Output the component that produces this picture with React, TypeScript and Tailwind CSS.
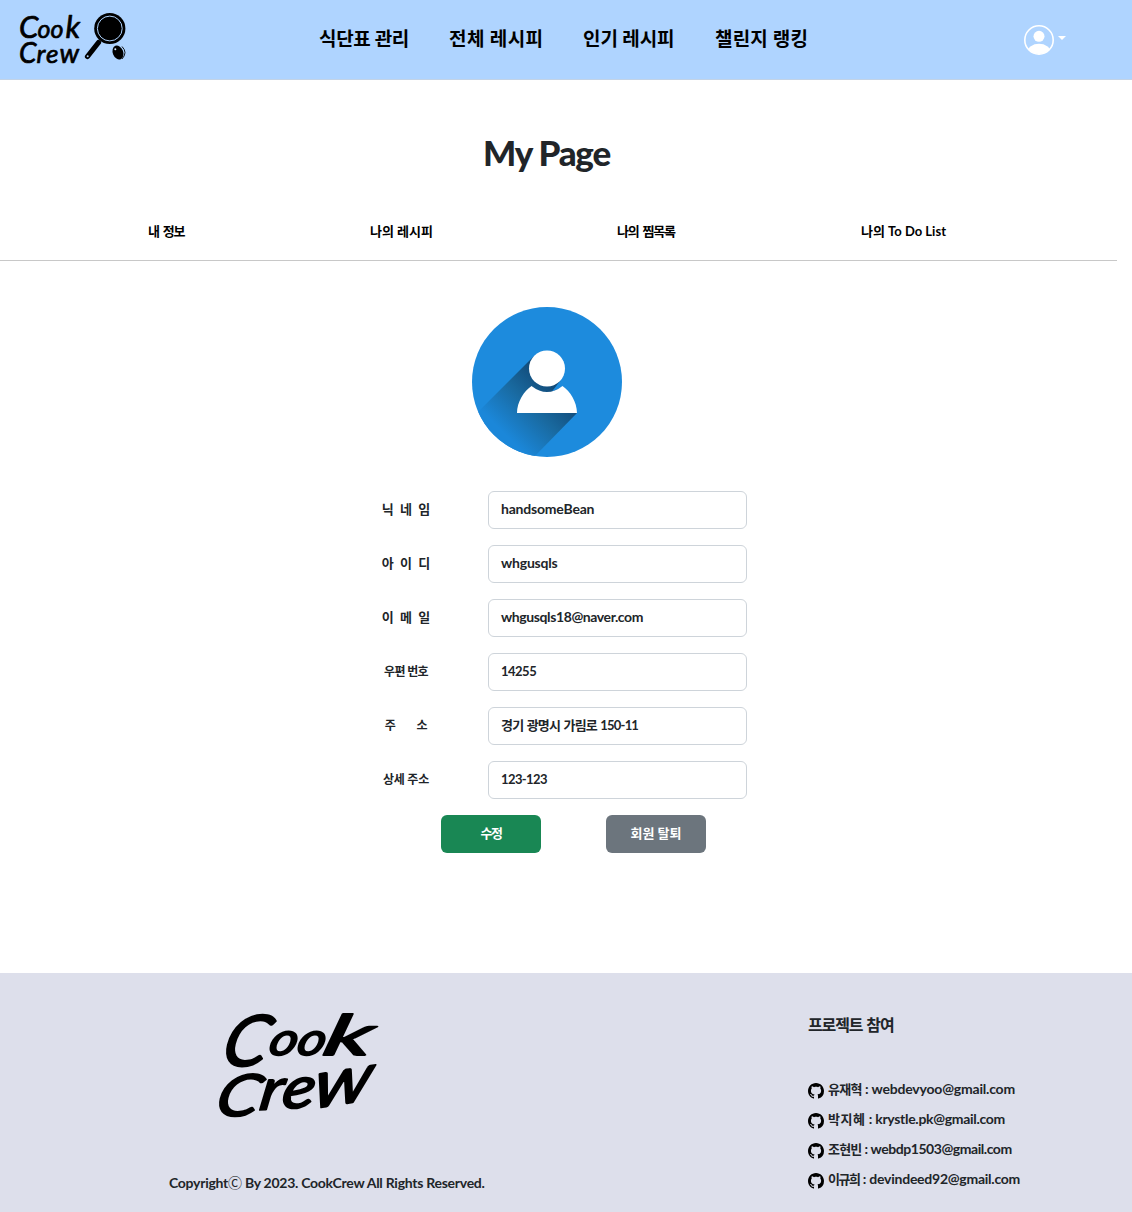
import React from "react";
import { BsGithub } from "react-icons/bs";

const nav = [
  { label: "식단표 관리", box: "w-[90px] tracking-[-0.35px]" },
  { label: "전체 레시피", box: "w-[94px] tracking-[0.4px]" },
  { label: "인기 레시피", box: "w-[92px] tracking-[-0.1px]" },
  { label: "챌린지 랭킹", box: "w-[93px] tracking-[0.2px]" },
];

const fields = [
  { label: "닉  네  임", value: "handsomeBean", box: "pb-[3px]", fit: "tracking-[-0.2px]", labelFit: "" },
  { label: "아  이  디", value: "whgusqls", box: "pb-[3px]", fit: "tracking-[-0.2px]", labelFit: "" },
  { label: "이  메  일", value: "whgusqls18@naver.com", box: "pb-[3px]", fit: "tracking-[-0.4px]", labelFit: "" },
  { label: "우편 번호", value: "14255", box: "pb-0", fit: "text-[13px] tracking-[-0.5px]", labelFit: "text-[12px] tracking-[-0.6px]" },
  { label: "주        소", value: "경기 광명시 가림로 150-11", box: "pb-0", fit: "text-[13px] tracking-[-0.8px] [word-spacing:1px]", labelFit: "text-[12px] tracking-[-0.3px]" },
  { label: "상세 주소", value: "123-123", box: "pb-0", fit: "text-[13px] tracking-[-0.6px]", labelFit: "text-[12px] tracking-[-0.2px]" },
];

const members = [
  { name: "유재혁", mail: "webdevyoo@gmail.com", fit: "tracking-[-0.2px]", nameFit: "tracking-[-0.7px]" },
  { name: "박지혜", mail: "krystle.pk@gmail.com", fit: "tracking-[-0.3px]", nameFit: "tracking-[0.6px]" },
  { name: "조현빈", mail: "webdp1503@gmail.com", fit: "tracking-[-0.45px]", nameFit: "tracking-[-0.8px]" },
  { name: "이규희", mail: "devindeed92@gmail.com", fit: "tracking-[-0.25px]", nameFit: "tracking-[-1.4px]" },
];

function HeaderLogo() {
  return (
    <svg width="110" height="58" viewBox="18 9 110 58" className="mb-[3px] ml-[18px] overflow-visible">
      <g fontFamily="Lato, sans-serif" fontStyle="italic" fontWeight="400" fill="#000" stroke="#000" strokeWidth="0.7" strokeLinejoin="round">
        <text y="38">
          <tspan x="19" fontSize="31">C</tspan>
          <tspan x="37.5" fontSize="25">o</tspan>
          <tspan x="50.5" fontSize="25">o</tspan>
          <tspan x="65.5" fontSize="31">k</tspan>
        </text>
        <text y="62.5">
          <tspan x="19" fontSize="28">C</tspan>
          <tspan x="36.5" fontSize="26">r</tspan>
          <tspan x="46" fontSize="26">e</tspan>
          <tspan x="59.5" fontSize="27">w</tspan>
        </text>
      </g>
      <path d="M98.5 42.5 87.5 56.5" stroke="#000" strokeWidth="5.2" strokeLinecap="round" />
      <circle cx="109.8" cy="28.5" r="15.6" />
      <circle cx="109.8" cy="28.5" r="12.4" fill="none" stroke="#afd4ff" strokeWidth="1" />
      <circle cx="87.7" cy="56.2" r="1" fill="#afd4ff" />
      <ellipse cx="118" cy="52.5" rx="5.2" ry="7.2" transform="rotate(-22 118 52.5)" />
      <path d="M122 46.5Q128 52.5 122 59" stroke="#000" strokeWidth="0.9" fill="none" />
      <circle cx="115.3" cy="49.3" r="1" fill="#d5e8ff" />
    </svg>
  );
}

function FooterLogo() {
  return (
    <svg width="166" height="112" viewBox="216 1008 166 112" className="overflow-visible">
      <g fontFamily="Lato, sans-serif" fontStyle="italic" fontWeight="400" fill="#000" stroke="#000" strokeWidth="1.8" strokeLinejoin="round">
        <text transform="translate(219 1066) skewX(-14)" fontSize="71" textLength="45" lengthAdjust="spacingAndGlyphs">C</text>
        <text transform="translate(267 1055) skewX(-14)" fontSize="46" textLength="56" lengthAdjust="spacingAndGlyphs">oo</text>
        <text transform="translate(321 1055) skewX(-14)" fontSize="56" textLength="48" lengthAdjust="spacingAndGlyphs">k</text>
        <text transform="translate(213 1116) skewX(-14)" fontSize="58" textLength="43" lengthAdjust="spacingAndGlyphs">C</text>
        <text transform="translate(258 1110) rotate(-3) skewX(-12)" fontSize="58" textLength="55" lengthAdjust="spacingAndGlyphs">re</text>
        <text transform="translate(311 1109) rotate(-9) skewX(-18)" fontSize="66" textLength="59" lengthAdjust="spacingAndGlyphs">w</text>
      </g>
    </svg>
  );
}

function Avatar() {
  return (
    <svg width="150" height="150" viewBox="0 0 150 150">
      <defs>
        <clipPath id="disc"><circle cx="75" cy="75" r="75" /></clipPath>
        <linearGradient id="shade" gradientUnits="userSpaceOnUse" x1="82" y1="78" x2="33" y2="127">
          <stop offset="0" stopColor="#124a78" />
          <stop offset="0.45" stopColor="#19699f" />
          <stop offset="1" stopColor="#1b87d9" />
        </linearGradient>
      </defs>
      <g clipPath="url(#disc)">
        <rect width="150" height="150" fill="#1d8bdd" />
        <path d="M61.5 49.5 0 111V150H62L105 106 88 74Z" fill="url(#shade)" />
      </g>
      <path d="M80 84.5 88 74 93 79Z" fill="#1d8bdd" />
      <circle cx="75" cy="61.5" r="18" fill="#fff" />
      <path d="M59.5 79Q75 91 90.5 79C98 84 105 95 105 106H45C45 95 52 84 59.5 79Z" fill="#fff" />
    </svg>
  );
}

export default function App() {
  return (
    <div className="flex h-[1212px] w-[1132px] flex-col bg-white font-['Lato','Noto_Sans_CJK_KR',sans-serif] text-[14px] font-bold text-[#212529]">
      <header className="flex h-20 shrink-0 items-center border-b border-[#c3d3e6] bg-[#afd4ff] text-black">
        <HeaderLogo />
        <nav className="mb-[2px] ml-[191px] flex gap-10 text-[19px] leading-8">
          {nav.map((n) => (
            <a key={n.label} className={`${n.box} whitespace-nowrap`}>{n.label}</a>
          ))}
        </nav>
        <button className="ml-[216px] flex items-center gap-1">
          <svg width="30" height="30" viewBox="0 0 30 30">
            <defs><clipPath id="user"><circle cx="15" cy="15" r="14" /></clipPath></defs>
            <circle cx="15" cy="15" r="14.2" fill="none" stroke="#fff" strokeWidth="1.6" />
            <circle cx="15" cy="11.3" r="5.5" fill="#fff" />
            <ellipse cx="15" cy="27" rx="11.5" ry="8.3" fill="#fff" clipPath="url(#user)" />
          </svg>
          <svg width="8" height="4" viewBox="0 0 8 4" className="mb-1"><path d="M0 0H8L4 4Z" fill="#fff" /></svg>
        </button>
      </header>

      <main className="flex h-[893px] shrink-0 flex-col">
        <h1 className="mt-[48px] w-[1093px] text-center text-[35px] leading-[48px] font-black tracking-[-1.2px]">My Page</h1>
        <nav className="mt-10 flex h-[45px] w-[1117px] border-b border-[#c8c8c8] pl-[148px] text-[13px] leading-[30px] text-black">
          <a className="w-[222px] tracking-[-1.2px] [word-spacing:2px]">내 정보</a>
          <a className="w-[247px]">나의 레시피</a>
          <a className="w-[244px] tracking-[-1.2px] [word-spacing:2px]">나의 찜목록</a>
          <a className="whitespace-nowrap">나의 To Do List</a>
        </nav>
        <div className="mt-[46px] flex w-[1093px] justify-center"><Avatar /></div>
        <form className="mt-[34px] ml-[346px] flex w-[401px] flex-col gap-4">
          {fields.map((f) => (
            <label key={f.label} className="flex h-[38px] items-center text-[13px]">
              <span className={`w-[120px] text-center whitespace-pre ${f.labelFit}`}>{f.label}</span>
              <span className={`ml-[22px] flex h-[38px] w-[259px] items-center rounded-md border border-[#ced4da] px-3 text-[14px] ${f.box}`}>
                <span className={`whitespace-nowrap ${f.fit}`}>{f.value}</span>
              </span>
            </label>
          ))}
        </form>
        <div className="mt-4 ml-[441px] flex gap-[65px] text-[13px] text-white">
          <button className="h-[38px] w-[100px] rounded-md bg-[#198754] tracking-[-1.5px]">수정</button>
          <button className="h-[38px] w-[100px] rounded-md bg-[#6c757d]">회원 탈퇴</button>
        </div>
      </main>

      <footer className="flex h-[239px] shrink-0 bg-[#dddfeb]">
        <div className="flex w-[808px] flex-col pt-[35px]">
          <div className="ml-[216px]"><FooterLogo /></div>
          <p className="mt-[51px] ml-[169px] leading-6 tracking-[-0.27px] whitespace-nowrap">Copyright<span className="font-normal">Ⓒ</span> By 2023. CookCrew All Rights Reserved.</p>
        </div>
        <div className="pt-10">
          <h2 className="text-[16px] leading-6 tracking-[-1.1px] [word-spacing:1px]">프로젝트 참여</h2>
          <ul className="mt-[37px]">
            {members.map((m) => (
              <li key={m.mail} className="flex h-[30px] items-center whitespace-nowrap">
                <BsGithub size={16} color="#000" className="mt-1 mr-1" />
                <span className={m.fit}><span className={`text-[13px] ${m.nameFit}`}>{m.name}</span> : {m.mail}</span>
              </li>
            ))}
          </ul>
        </div>
      </footer>
    </div>
  );
}
